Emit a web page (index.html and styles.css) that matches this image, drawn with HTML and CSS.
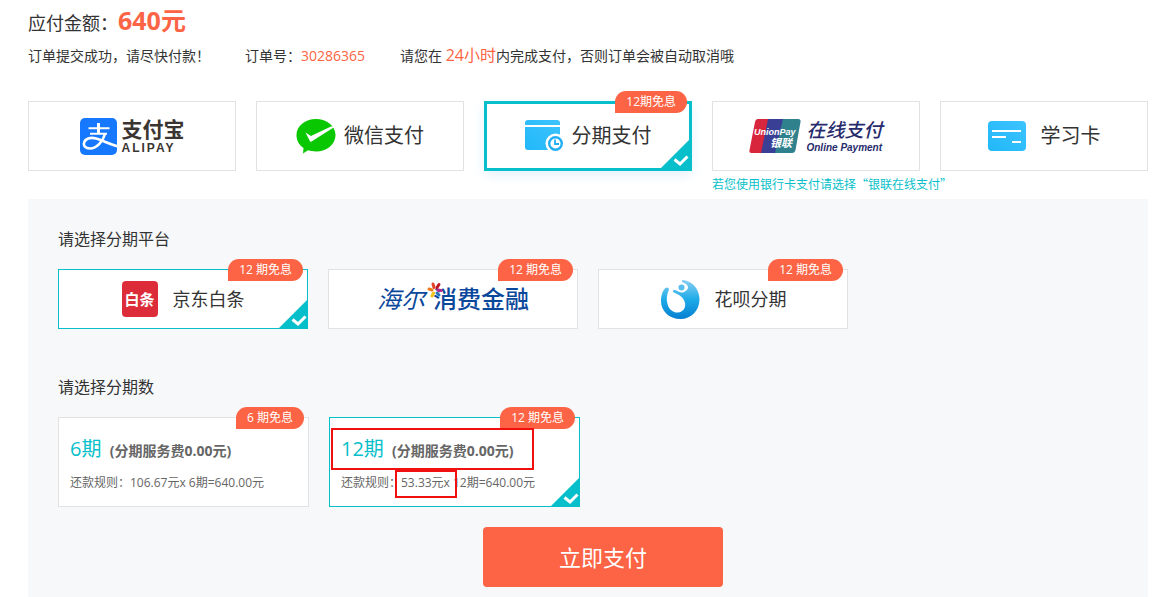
FILE: index.html
```html
<!DOCTYPE html>
<html lang="zh-CN">
<head>
    <meta charset="UTF-8">
    <meta name="viewport" content="width=device-width, initial-scale=1.0">
    <title>订单支付</title>
    <link rel="stylesheet" href="styles.css">
</head>
<body>

<svg class="sprite" aria-hidden="true">
    <symbol id="corner" viewBox="0 0 28 28">
        <path d="M28 0V28H0z" fill="#07bfca"/>
        <path d="M13.500 19.500L19 24L26.500 16.500" fill="none" stroke="#fff" stroke-width="3"/>
    </symbol>
</svg>

<form class="pay">
    <header class="order">
        <h1>应付金额：<strong>640元</strong></h1>
        <p class="order-info">
            <span>订单提交成功，请尽快付款！</span>
            <span>订单号：<em>30286365</em></span>
            <span>请您在 <em class="limit">24小时</em>内完成支付，否则订单会被自动取消哦</span>
        </p>
    </header>

    <section class="methods">
        <label class="card method">
            <input type="radio" name="method" value="alipay" aria-label="支付宝">
            <svg class="icon" width="37" height="37" viewBox="0 0 37 37">
                <rect width="37" height="37" rx="5" fill="#1678ff"/>
                <g fill="none" stroke="#fff">
                    <path d="M8.500 10.200H29.500M10 15.800H27" stroke-width="2"/>
                    <path d="M18.500 5V16" stroke-width="3"/>
                    <path d="M25 16C23 23 17 30.500 10 30.500C5 30.500 3.500 27.500 4 25C4.800 20.500 10.500 19 16 20.500C23 22.500 29 26 38 28.500" stroke-width="2.600"/>
                </g>
            </svg>
            <span class="alipay-name">支付宝<small>ALIPAY</small></span>
        </label>

        <label class="card method">
            <input type="radio" name="method" value="wechat">
            <svg class="icon" width="40" height="36" viewBox="0 0 40 36">
                <path d="M20 1C31 1 39.500 8 39.500 17S31 33.500 20 33.500C17 33.500 14.500 33 12 32.300L7 35.500L7.500 30C3 27 .5 22.500 .5 17C.5 8 9 1 20 1z" fill="#09c700"/>
                <path d="M9.500 14.500L15 18L35 8.500L40 8L15.500 23.500C14.500 24 14 23.500 13.700 22.800L9.500 14.500z" fill="#fff"/>
            </svg>
            <span class="name">微信支付</span>
        </label>

        <label class="card method">
            <input type="radio" name="method" value="installment" checked>
            <svg class="icon" width="39" height="32" viewBox="0 0 39 32">
                <defs>
                    <linearGradient id="blue" x1="0" y1="1" x2="1" y2="0">
                        <stop offset="0" stop-color="#21b8f8"/>
                        <stop offset="1" stop-color="#3dc3ff"/>
                    </linearGradient>
                </defs>
                <rect y="0" width="35" height="30" rx="3" fill="url(#blue)"/>
                <path d="M0 6H35" stroke="#fff" stroke-width="2"/>
                <circle cx="30.500" cy="23.500" r="10" fill="#fff"/>
                <circle cx="30.500" cy="23.500" r="6.300" fill="none" stroke="#21aef2" stroke-width="2.400"/>
                <path d="M30 19.500V24H34" fill="none" stroke="#21aef2" stroke-width="1.800"/>
            </svg>
            <span class="name">分期支付</span>
            <span class="badge">12期免息</span>
            <svg class="corner"><use href="#corner"/></svg>
        </label>

        <div>
            <label class="card method">
                <input type="radio" name="method" value="unionpay">
                <svg class="icon" width="52" height="35" viewBox="0 0 52 35">
                    <path d="M9 0H20L13 34H3C1 34 0 33 .5 31L6 3C6.500 1 7.500 0 9 0z" fill="#d8263c"/>
                    <path d="M19 0H35L27 34H12z" fill="#3a3f96"/>
                    <path d="M34 0H49C51 0 52 1 51.500 3L46.500 31C46 33 45 34 43 34H26z" fill="#2f828d"/>
                    <text x="5" y="16" class="union-en">UnionPay</text>
                    <text x="21" y="28" class="union-cn">银联</text>
                </svg>
                <span class="union-name">在线支付<small>Online Payment</small></span>
            </label>
            <p class="note">若您使用银行卡支付请选择“银联在线支付”</p>
        </div>

        <label class="card method wide">
            <input type="radio" name="method" value="card">
            <svg class="icon" width="38" height="30" viewBox="0 0 38 30">
                <rect width="38" height="30" rx="4" fill="url(#blue)"/>
                <path d="M4 10H33M4 16H18M24 21H33" stroke="#fff" stroke-width="2"/>
            </svg>
            <span class="name">学习卡</span>
        </label>
    </section>

    <section class="panel">
        <h2>请选择分期平台</h2>
        <div class="row">
            <label class="card platform wide">
                <input type="radio" name="platform" value="jd" checked>
                <span class="jd" aria-hidden="true">白条</span>
                <span class="name">京东白条</span>
                <span class="badge">12 期免息</span>
                <svg class="corner"><use href="#corner"/></svg>
            </label>
            <label class="card platform">
                <input type="radio" name="platform" value="haier">
                <span class="haier"><i>海尔</i>消费金融
                    <svg class="flower" width="16" height="16" viewBox="-8 -8 16 16">
                        <g stroke-width="3" stroke-linecap="round">
                            <path d="M-1 -2.500L-2 -6" stroke="#e0452c"/>
                            <path d="M2 -2.500L4 -5.500" stroke="#c01722"/>
                            <path d="M3 0L6 .5" stroke="#b5288a"/>
                            <path d="M2 3L4 5" stroke="#2a70bd"/>
                            <path d="M-1.500 3L-3 6" stroke="#f0c419"/>
                            <path d="M-3 0L-6 -1" stroke="#ee7a1d"/>
                        </g>
                    </svg>
                </span>
                <span class="badge">12 期免息</span>
            </label>
            <label class="card platform wide">
                <input type="radio" name="platform" value="huabei">
                <svg class="icon" width="40" height="40" viewBox="0 0 40 40">
                    <defs>
                        <linearGradient id="drop" x1="0" y1="0" x2="0" y2="1">
                            <stop offset="0" stop-color="#8acdf2"/>
                            <stop offset=".5" stop-color="#1dabe8"/>
                            <stop offset="1" stop-color="#087fd0"/>
                        </linearGradient>
                    </defs>
                    <path d="M23 1C33 2 39.500 11 39.500 20C39.500 32 31 40 20.500 40C9 40 1 32 1 22C1 16 3 11 5.500 9C7 7.500 9.500 9 8.800 11C7 15 6 20 7.500 25C9 31 14 34 18 33.500C23 33 26 29 25 24C24 18 19 16 14 13.500C12 12.500 13 10.500 15 11C19 12.500 21 14.500 24 13C29 11 30 6 23 3.500C21.500 3 21.500 1 23 1z" fill="url(#drop)"/>
                    <circle cx="21.500" cy="8.500" r="3" fill="#5abdec"/>
                </svg>
                <span class="name">花呗分期</span>
                <span class="badge">12 期免息</span>
            </label>
        </div>

        <h2>请选择分期数</h2>
        <div class="row">
            <label class="card plan">
                <input type="radio" name="plan" value="6">
                <span class="plan-title">6期 <b>(分期服务费0.00元)</b></span>
                <span class="plan-rule">还款规则：106.67元x 6期=640.00元</span>
                <span class="badge">6 期免息</span>
            </label>
            <label class="card plan">
                <input type="radio" name="plan" value="12" checked>
                <span class="plan-title">12期 <b>(分期服务费0.00元)</b></span>
                <span class="plan-rule">还款规则：53.33元x 12期=640.00元</span>
                <span class="badge">12 期免息</span>
                <svg class="corner"><use href="#corner"/></svg>
                <span class="mark mark-fee"></span>
                <span class="mark mark-price"></span>
            </label>
        </div>

        <button type="submit">立即支付</button>
    </section>
</form>

</body>
</html>
```

FILE: styles.css
```css
* {
    box-sizing: border-box;
}

body {
    margin: 0;
    background-color: #fff;
    color: #333;
    font-family: "Open Sans", "Noto Sans CJK SC", sans-serif;
    font-size: 14px;
    line-height: 20px;
}

h1, h2, p {
    margin: 0;
    font-weight: normal;
}

em {
    color: #fc6445;
    font-style: normal;
}

.sprite {
    position: absolute;
    width: 0;
    height: 0;
}

.pay {
    padding: 5px 21px 0 28px;
}

/* order summary */
h1 {
    height: 30px;
    font-size: 18px;
    line-height: 30px;
}

h1 strong {
    color: #fc6445;
    font-size: 25px;
}

.order-info {
    display: flex;
    gap: 35px;
    margin: 11px 0 35px;
    line-height: 20px;
}

.limit {
    font-size: 16px;
    line-height: 16px;
}

/* option cards */
.methods {
    display: grid;
    grid-template-columns: repeat(5, minmax(0, 1fr));
    gap: 20px;
    align-items: start;
    margin-bottom: 5px;
}

.card {
    position: relative;
    display: flex;
    align-items: center;
    justify-content: center;
    gap: 8px;
    border: 1px solid #e2e2e2;
    background-color: #fff;
    cursor: pointer;
}

.card input {
    position: absolute;
    inset: 0;
    width: 100%;
    height: 100%;
    margin: 0;
    opacity: 0;
    cursor: pointer;
}

.card:has(input:checked) {
    border-color: #07bfca;
}

.wide {
    gap: 15px;
}

.method {
    height: 70px;
}

.method:has(input:checked) {
    border-width: 3px;
    box-shadow: 0 4px 12px #e3f2ff;
}

.icon {
    flex: none;
}

.name {
    font-size: 20px;
    line-height: 30px;
    white-space: nowrap;
}

.badge {
    position: absolute;
    top: -11px;
    right: 4px;
    padding: 0 11px;
    border-radius: 11px 11px 11px 0;
    background-color: #fc6445;
    color: #fff;
    font-size: 12px;
    line-height: 22px;
    white-space: nowrap;
}

.method .badge {
    top: -13px;
    right: 2px;
}

.corner {
    position: absolute;
    right: 0;
    bottom: 0;
    width: 28px;
    height: 28px;
}

.note {
    margin-top: 3px;
    color: #07bfca;
    font-family: "Noto Sans CJK SC", sans-serif;
    font-size: 12px;
    line-height: 20px;
    white-space: nowrap;
}

/* brand names */
.alipay-name,
.union-name {
    display: flex;
    flex-direction: column;
    white-space: nowrap;
}

.alipay-name {
    margin-left: -3px;
    color: #3b3532;
    font-size: 21px;
    font-weight: bold;
    line-height: 24px;
}

.alipay-name small {
    font-family: "Liberation Sans", sans-serif;
    font-size: 12px;
    letter-spacing: 2px;
    line-height: 14px;
}

.union-name {
    margin-left: -3px;
    color: #272b6c;
    font-size: 19px;
    font-style: italic;
    font-weight: 500;
    line-height: 24px;
}

.union-name small {
    font-family: "Liberation Sans", sans-serif;
    font-size: 10px;
    font-weight: bold;
    line-height: 12px;
}

.union-en,
.union-cn {
    fill: #fff;
    font-style: italic;
    font-weight: bold;
}

.union-en {
    font-family: "Liberation Sans", sans-serif;
    font-size: 9px;
}

.union-cn {
    font-size: 11px;
}

.jd {
    width: 36px;
    height: 36px;
    border-radius: 4px;
    background-color: #dc2c3a;
    color: #fff;
    font-size: 15px;
    font-weight: bold;
    line-height: 36px;
    text-align: center;
}

.haier {
    position: relative;
    color: #0b489c;
    font-size: 24px;
    font-weight: 500;
    line-height: 30px;
    white-space: nowrap;
}

.haier i {
    margin-right: 8px;
    font-weight: 400;
}

.flower {
    position: absolute;
    top: -2px;
    left: 50px;
}

/* installment panel */
.panel {
    padding: 28px 0 10px 30px;
    background-color: #f7f8fa;
}

h2 {
    margin-bottom: 18px;
    font-size: 16px;
    line-height: 24px;
}

.row {
    display: flex;
    gap: 20px;
}

.row + h2 {
    margin-top: 46px;
}

.platform {
    width: 250px;
    height: 60px;
}

.platform .name {
    font-size: 18px;
}

.plan {
    flex-direction: column;
    align-items: flex-start;
    width: 251px;
    padding: 15px 11px 13px;
    color: #666;
}

.plan-title {
    color: #07bfca;
    font-size: 20px;
    line-height: 32px;
}

.plan-title b {
    margin-left: 3px;
    color: #666;
    font-size: 14px;
    line-height: 20px;
}

.plan-rule {
    font-size: 12px;
    line-height: 20px;
}

/* red highlight frames */
.mark {
    position: absolute;
    border: 2px solid #f01010;
    pointer-events: none;
}

.mark-fee {
    top: 10px;
    left: 1px;
    width: 203px;
    height: 42px;
}

.mark-price {
    top: 52px;
    left: 65px;
    width: 62px;
    height: 28px;
}

button {
    display: block;
    width: 240px;
    height: 60px;
    margin: 20px auto 0;
    padding: 0 0 2px;
    border: none;
    border-radius: 4px;
    background-color: #fc6445;
    color: #fff;
    font-family: inherit;
    font-size: 22px;
    cursor: pointer;
}
```
